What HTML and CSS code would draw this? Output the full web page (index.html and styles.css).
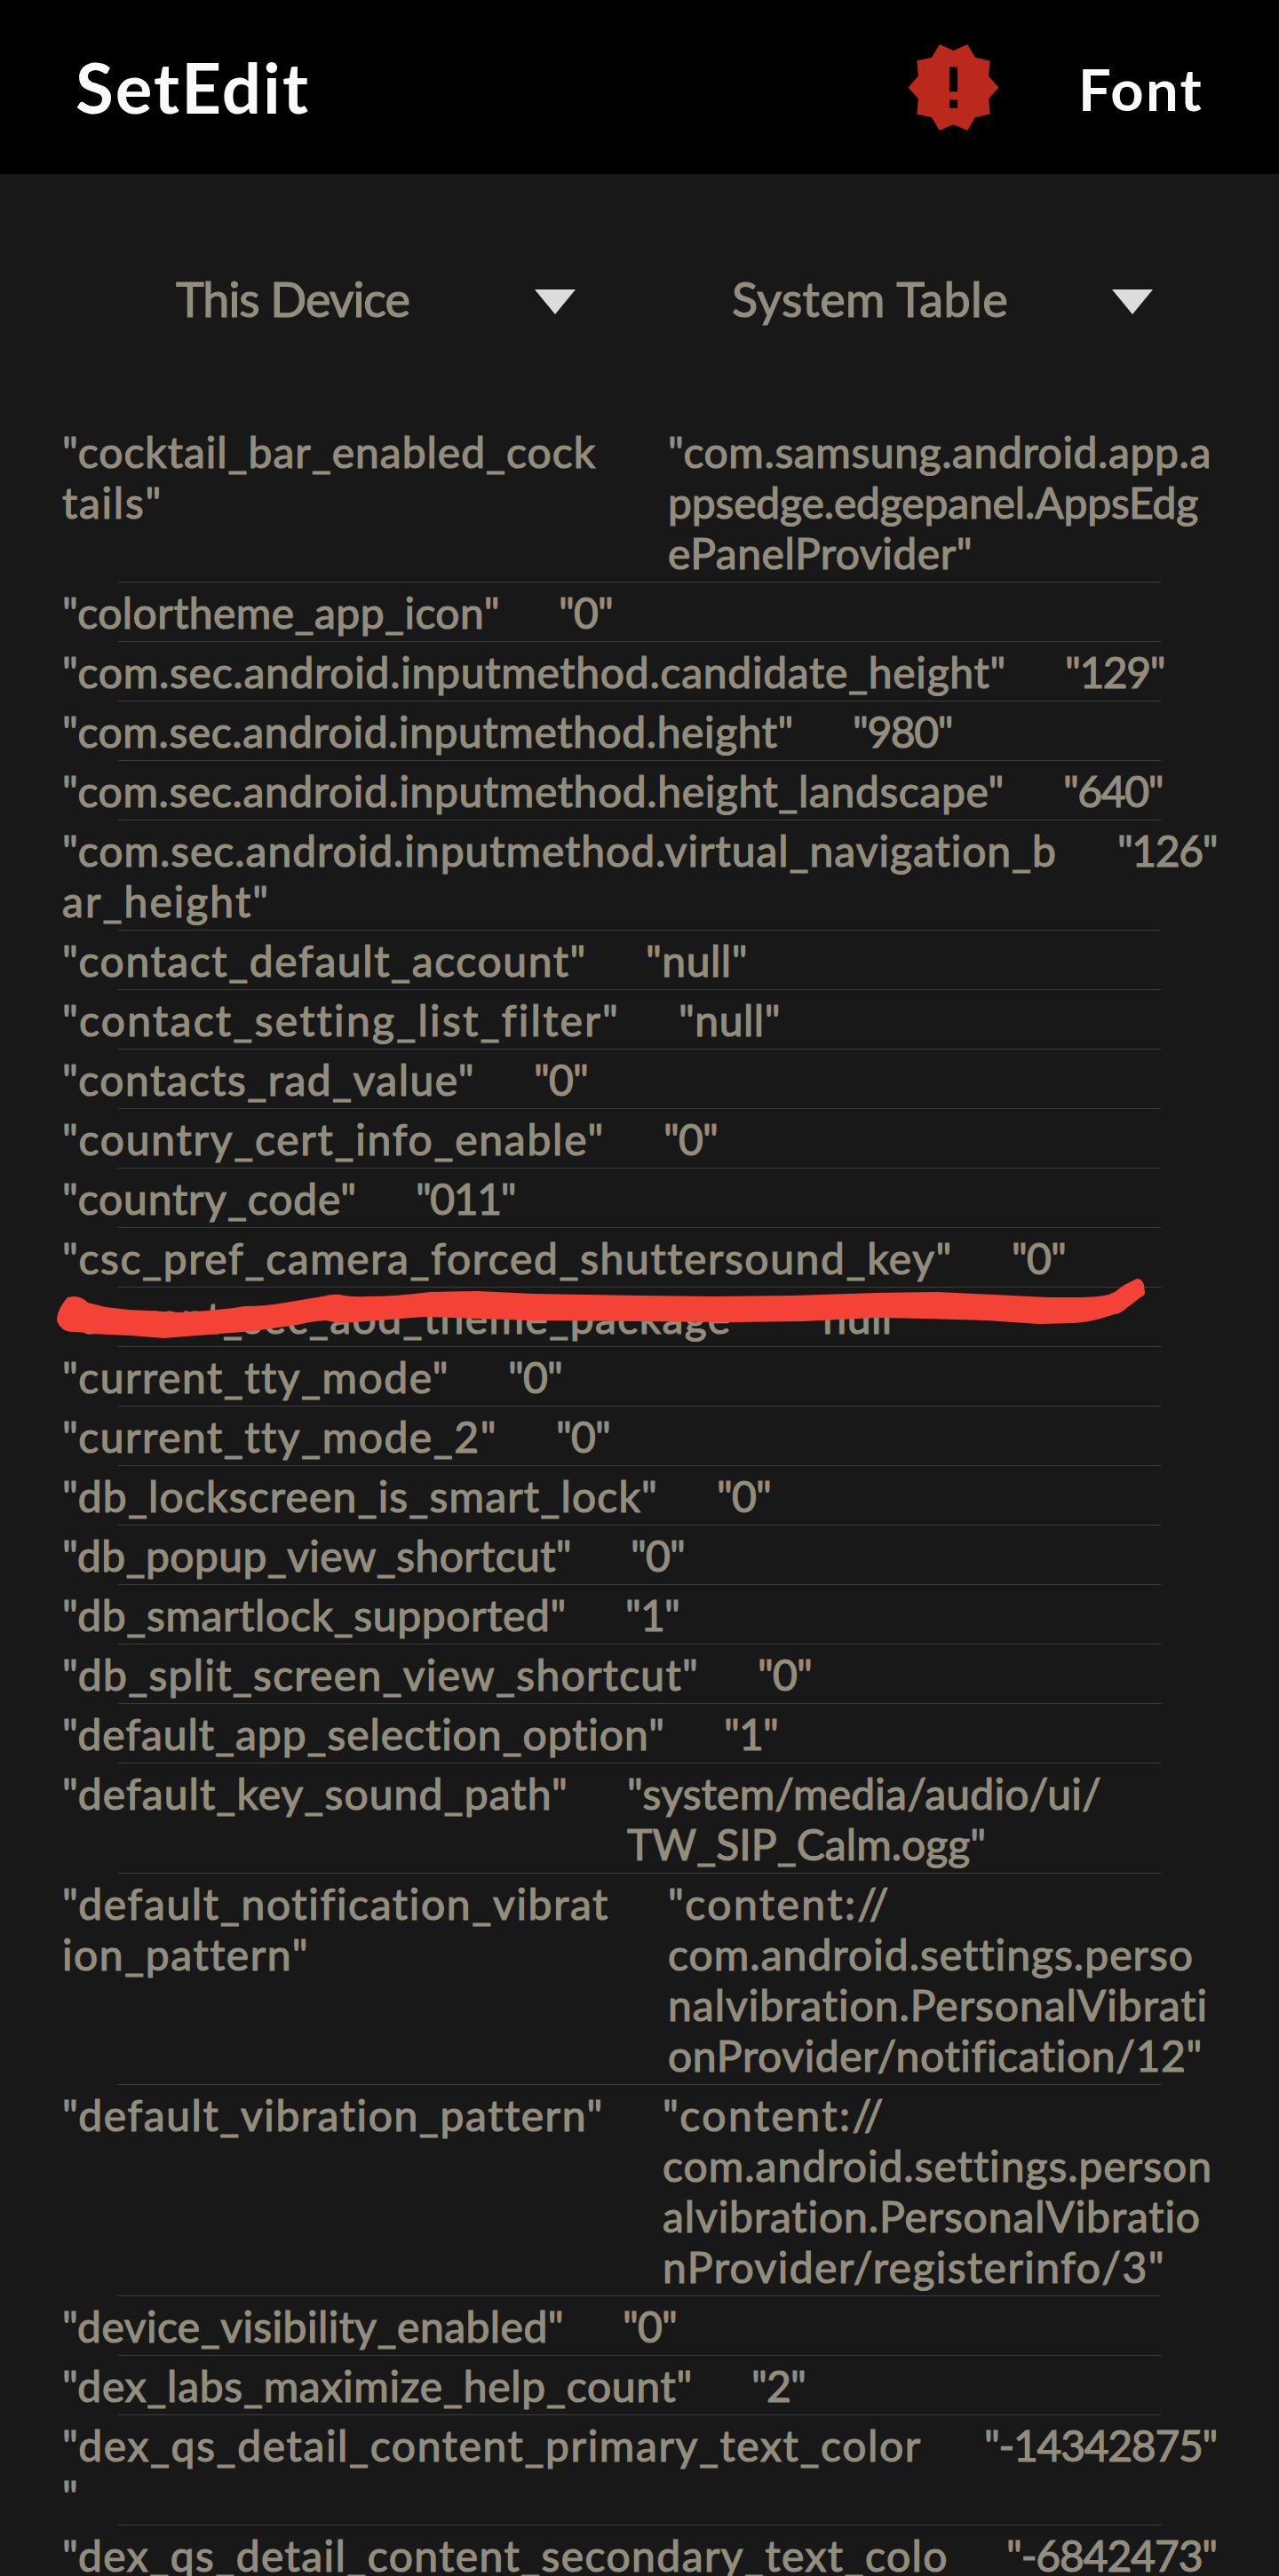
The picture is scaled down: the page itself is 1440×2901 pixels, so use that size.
FILE: index.html
```html
<!DOCTYPE html>
<html lang="en">
<head>
    <meta charset="UTF-8">
    <title>SetEdit</title>
    <link rel="stylesheet" href="styles.css">
</head>
<body>
<header class="topbar">
    <h1><span data-w="264">SetEdit</span></h1>
    <svg class="alert" viewBox="0 0 24 24">
        <path d="M23 12l-2.44-2.78.34-3.68-3.61-.82-1.89-3.18L12 3 8.6 1.54 6.71 4.72l-3.61.81.34 3.68L1 12l2.44 2.78-.34 3.69 3.61.82 1.89 3.18L12 21l3.4 1.46 1.89-3.18 3.61-.82-.34-3.68L23 12zm-10 5h-2v-2h2v2zm0-4h-2V7h2v6z"/>
    </svg>
    <div class="font-btn"><span data-w="141">Font</span></div>
</header>
<div class="selectors">
    <div class="select"><span data-w="263">This Device</span><i class="arrow"></i></div>
    <div class="select"><span data-w="311">System Table</span><i class="arrow"></i></div>
</div>
<main class="list">
    <div class="row half">
        <div class="key"><span data-w="601">"cocktail_bar_enabled_cock</span><span data-w="113">tails"</span></div>
        <div class="value"><span data-w="612">"com.samsung.android.app.a</span><span data-w="597">ppsedge.edgepanel.AppsEdg</span><span data-w="343">ePanelProvider"</span></div>
    </div>
    <div class="row"><div class="key"><span data-w="493">"colortheme_app_icon"</span></div><div class="value"><span data-w="61">"0"</span></div></div>
    <div class="row"><div class="key"><span data-w="1063">"com.sec.android.inputmethod.candidate_height"</span></div><div class="value"><span data-w="112">"129"</span></div></div>
    <div class="row"><div class="key"><span data-w="824">"com.sec.android.inputmethod.height"</span></div><div class="value"><span data-w="112">"980"</span></div></div>
    <div class="row"><div class="key"><span data-w="1061">"com.sec.android.inputmethod.height_landscape"</span></div><div class="value"><span data-w="112">"640"</span></div></div>
    <div class="row spread">
        <div class="key"><span data-w="1120">"com.sec.android.inputmethod.virtual_navigation_b</span><span data-w="234">ar_height"</span></div>
        <div class="value"><span data-w="112">"126"</span></div>
    </div>
    <div class="row"><div class="key"><span data-w="591">"contact_default_account"</span></div><div class="value"><span data-w="115">"null"</span></div></div>
    <div class="row"><div class="key"><span data-w="628">"contact_setting_list_filter"</span></div><div class="value"><span data-w="115">"null"</span></div></div>
    <div class="row"><div class="key"><span data-w="465">"contacts_rad_value"</span></div><div class="value"><span data-w="61">"0"</span></div></div>
    <div class="row"><div class="key"><span data-w="611">"country_cert_info_enable"</span></div><div class="value"><span data-w="61">"0"</span></div></div>
    <div class="row"><div class="key"><span data-w="332">"country_code"</span></div><div class="value"><span data-w="112">"011"</span></div></div>
    <div class="row"><div class="key"><span data-w="1003">"csc_pref_camera_forced_shuttersound_key"</span></div><div class="value"><span data-w="61">"0"</span></div></div>
    <div class="row">
        <div class="key"><span data-w="772">"current_sec_aod_theme_package"</span></div><div class="value"><span data-w="115">"null"</span></div>
        <!-- red marker line drawn by hand -->
        <svg class="marker" viewBox="0 1430 1440 90">
            <path d="M83 1460Q92 1460 99 1467L119 1472L145 1475Q172 1476 202 1478Q240 1477 275 1471Q300 1471 321 1467L363 1460Q375 1457 383 1458Q395 1461 413 1460Q447 1460 484 1455L537 1454L601 1457L720 1459L803 1460L894 1459L986 1456L1055 1455L1119 1458L1179 1461L1216 1461Q1236 1461 1248 1458L1255 1455L1266 1447L1280 1440Q1286 1440 1288 1447L1289 1456Q1289 1459 1284 1461L1266 1475Q1260 1480 1255 1480L1239 1485Q1225 1489 1209 1490L1170 1491L1110 1487L1041 1485L986 1484L904 1488L826 1489L720 1488L597 1487L478 1483L386 1490Q378 1490 367 1487Q350 1488 335 1492L285 1499L248 1502L184 1507L147 1504L101 1502Q92 1500 83 1500Q73 1500 69 1495Q64 1490 64 1485Q65 1474 76 1461Z"/>
        </svg>
    </div>
    <div class="row"><div class="key"><span data-w="436">"current_tty_mode"</span></div><div class="value"><span data-w="61">"0"</span></div></div>
    <div class="row"><div class="key"><span data-w="490">"current_tty_mode_2"</span></div><div class="value"><span data-w="61">"0"</span></div></div>
    <div class="row"><div class="key"><span data-w="671">"db_lockscreen_is_smart_lock"</span></div><div class="value"><span data-w="61">"0"</span></div></div>
    <div class="row"><div class="key"><span data-w="574">"db_popup_view_shortcut"</span></div><div class="value"><span data-w="61">"0"</span></div></div>
    <div class="row"><div class="key"><span data-w="568">"db_smartlock_supported"</span></div><div class="value"><span data-w="61">"1"</span></div></div>
    <div class="row"><div class="key"><span data-w="717">"db_split_screen_view_shortcut"</span></div><div class="value"><span data-w="61">"0"</span></div></div>
    <div class="row"><div class="key"><span data-w="679">"default_app_selection_option"</span></div><div class="value"><span data-w="61">"1"</span></div></div>
    <div class="row">
        <div class="key"><span data-w="570">"default_key_sound_path"</span></div>
        <div class="value"><span data-w="534">"system/media/audio/ui/</span><span data-w="404">TW_SIP_Calm.ogg"</span></div>
    </div>
    <div class="row half">
        <div class="key"><span data-w="616">"default_notification_vibrat</span><span data-w="278">ion_pattern"</span></div>
        <div class="value"><span data-w="251">"content://</span><span data-w="592">com.android.settings.perso</span><span data-w="608">nalvibration.PersonalVibrati</span><span data-w="602">onProvider/notification/12"</span></div>
    </div>
    <div class="row">
        <div class="key"><span data-w="610">"default_vibration_pattern"</span></div>
        <div class="value"><span data-w="251">"content://</span><span data-w="619">com.android.settings.person</span><span data-w="606">alvibration.PersonalVibratio</span><span data-w="566">nProvider/registerinfo/3"</span></div>
    </div>
    <div class="row"><div class="key"><span data-w="565">"device_visibility_enabled"</span></div><div class="value"><span data-w="61">"0"</span></div></div>
    <div class="row"><div class="key"><span data-w="710">"dex_labs_maximize_help_count"</span></div><div class="value"><span data-w="61">"2"</span></div></div>
    <div class="row spread">
        <div class="key"><span data-w="968">"dex_qs_detail_content_primary_text_color</span><span>"</span></div>
        <div class="value"><span data-w="262">"-14342875"</span></div>
    </div>
    <div class="row spread">
        <div class="key"><span data-w="998">"dex_qs_detail_content_secondary_text_colo</span></div>
        <div class="value"><span data-w="237">"-6842473"</span></div>
    </div>
</main>
<script src="fit.js"></script>
</body>
</html>
```
FILE: fit.js
```js
// Space the letters so each line takes the width in data-w
document.querySelectorAll("[data-w]").forEach(function(el) {
    var width = el.getBoundingClientRect().width;
    var gap = (el.dataset.w - width) / el.textContent.length;
    el.style.letterSpacing = gap.toFixed(3) + "px";
});
```
FILE: styles.css
```css
* {
    box-sizing: border-box;
}
body {
    margin: 0;
    height: 2901px;
    overflow: hidden;
    background: #181818;
    color: #938d7e;
    font-family: Lato, "Open Sans", sans-serif;
    font-size: 48px;
    font-variant-ligatures: none;
}
span {
    white-space: nowrap;
    width: max-content;
}
.topbar {
    height: 196px;
    padding: 0 85px;
    display: flex;
    align-items: center;
    background: #000;
    color: #fafafa;
}
h1 {
    margin: 0 auto 0 0;
    font-size: 78px;
    font-weight: 700;
}
.alert {
    width: 111px;
    height: 111px;
    fill: #bb281c;
}
.font-btn {
    margin: 3px 0 0 85px;
    font-size: 65px;
    font-weight: 700;
}
.selectors {
    height: 279px;
    padding-top: 112px;
    display: flex;
}
.select {
    height: 64px;
    width: 450px;
    margin-left: 198px;
    display: flex;
    align-items: center;
    justify-content: space-between;
    font-size: 54px;
    -webkit-text-stroke: 1.2px #938d7e;
}
.select + .select {
    width: 474px;
    margin-left: 176px;
}
.select span {
    padding-bottom: 7px;
}
.arrow {
    border: 23px solid transparent;
    border-top: 28px solid #dcdcdc;
    border-bottom: 0;
}
.list {
    padding-left: 70px;
}
.row {
    position: relative;
    width: 1300px;
    display: flex;
    gap: 66px;
    padding: 5px 0;
    line-height: 57px;
    -webkit-text-stroke: 1.2px #938d7e;
}
.row span {
    display: block;
}
/* divider is inset from the text on both sides */
.row::after {
    content: "";
    position: absolute;
    left: 63px;
    right: 63px;
    bottom: 0;
    height: 1px;
    background: #3c3c3c;
}
.half .key,
.half .value {
    width: 616px;
}
.spread {
    justify-content: space-between;
    gap: 0;
}
.marker {
    position: absolute;
    left: -70px;
    top: -20px;
    width: 1440px;
    height: 90px;
    fill: #f44336;
    z-index: 1;
}
```
